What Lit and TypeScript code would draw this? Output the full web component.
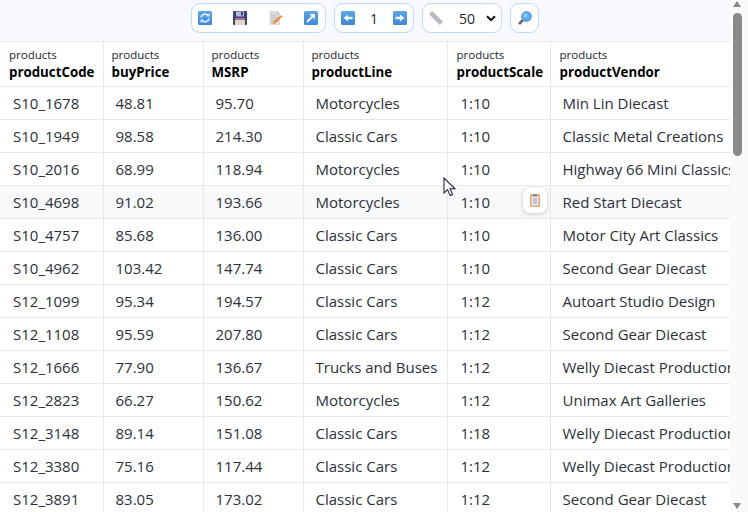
import { LitElement, html, css, svg } from "lit";
import { customElement } from "lit/decorators.js";

const rows: string[][] = [
  ["S10_1678", "48.81", "95.70", "Motorcycles", "1:10", "Min Lin Diecast"],
  ["S10_1949", "98.58", "214.30", "Classic Cars", "1:10", "Classic Metal Creations"],
  ["S10_2016", "68.99", "118.94", "Motorcycles", "1:10", "Highway 66 Mini Classics"],
  ["S10_4698", "91.02", "193.66", "Motorcycles", "1:10", "Red Start Diecast"],
  ["S10_4757", "85.68", "136.00", "Classic Cars", "1:10", "Motor City Art Classics"],
  ["S10_4962", "103.42", "147.74", "Classic Cars", "1:10", "Second Gear Diecast"],
  ["S12_1099", "95.34", "194.57", "Classic Cars", "1:12", "Autoart Studio Design"],
  ["S12_1108", "95.59", "207.80", "Classic Cars", "1:12", "Second Gear Diecast"],
  ["S12_1666", "77.90", "136.67", "Trucks and Buses", "1:12", "Welly Diecast Productions"],
  ["S12_2823", "66.27", "150.62", "Motorcycles", "1:12", "Unimax Art Galleries"],
  ["S12_3148", "89.14", "151.08", "Classic Cars", "1:18", "Welly Diecast Productions"],
  ["S12_3380", "75.16", "117.44", "Classic Cars", "1:12", "Welly Diecast Productions"],
  ["S12_3891", "83.05", "173.02", "Classic Cars", "1:12", "Second Gear Diecast"],
];
const heads = ["productCode", "buyPrice", "MSRP", "productLine", "productScale", "productVendor"];

const blueIcon = (inner: unknown) => html`<svg class="ic" viewBox="0 0 14 14">
  <defs><linearGradient id="bg" x1="0" y1="0" x2="0" y2="1"><stop offset="0" stop-color="#5ba6ea"/><stop offset="1" stop-color="#3f86d8"/></linearGradient></defs>
  <rect x="0" y="0" width="14" height="14" rx="1.5" fill="url(#bg)"/>${inner}</svg>`;

@customElement("app-root")
export class AppRoot extends LitElement {
  static styles = css`
    :host { display: flex; width: 748px; height: 512px; overflow: hidden; position: relative; background: #f8f9fc;
      font-family: "Open Sans", "Noto Sans", sans-serif; color: #212529; }
    .main { width: 730px; flex: none; display: flex; flex-direction: column; overflow: hidden; }
    .toolbar { height: 41px; flex: none; display: flex; justify-content: center; align-items: flex-start; gap: 8px; padding-top: 3px; box-sizing: border-box; }
    .grp { height: 30px; box-sizing: border-box; background: #fff; border: 1px solid #bfdbf7; border-radius: 9px; display: flex; align-items: center; flex: none; }
    .g1 { width: 135px; justify-content: space-between; padding: 0 7px 0 6px; }
    .g2 { width: 80px; justify-content: space-between; padding: 0 6px; font-size: 14px; }
    .g3 { width: 80px; padding: 0 6px; font-size: 14px; }
    .g3 span { margin: 0 11px 0 16px; }
    .g4 { width: 29px; justify-content: center; }
    .ic { width: 14px; height: 14px; display: block; flex: none; }
    .chev { width: 10px; height: 7px; flex: none; }
    table { border-collapse: collapse; table-layout: fixed; width: 730px; background: #fff; }
    th, td { border: 1px solid #e6e8ec; overflow: hidden; white-space: nowrap; box-sizing: border-box; }
    tr > :first-child { border-left: none; }
    tr > :last-child { border-right: none; }
    th { height: 45px; text-align: left; padding: 0 0 0 8px; font-weight: 400; vertical-align: middle; }
    th:first-child { padding-left: 9px; }
    th:nth-child(n + 5) { padding-left: 9px; }
    .t { display: block; font-size: 11.5px; line-height: 15px; color: #212529; }
    .n { display: block; font-size: 13.3px; line-height: 18px; font-weight: 700; color: #000; margin-top: 1px; }
    td { height: 33px; font-size: 15px; padding: 0 0 0 12px; position: relative; color: #2b3038; }
    td:first-child, td:nth-child(5) { padding-left: 13px; }
    tr.hover td { background: #f8f9fb; }
    .copy { position: absolute; right: 3px; top: 2px; width: 24px; height: 25px; background: #fff; border-radius: 7px; box-shadow: 0 1px 4px rgba(0,0,0,.2); display: flex; align-items: center; justify-content: center; }
    .sb { width: 18px; flex: none; box-sizing: border-box; padding-left: 3px; display: flex; flex-direction: column; align-items: flex-start; background: #fafafb; }
    .up { width: 0; height: 0; border-left: 4.5px solid transparent; border-right: 4.5px solid transparent; border-bottom: 6px solid #8a878a; margin-top: 1px; }
    .thumb { width: 9px; height: 143px; background: #8b888b; border-radius: 5px; margin-top: 6px; }
    .down { width: 0; height: 0; border-left: 4.5px solid transparent; border-right: 4.5px solid transparent; border-top: 6px solid #8a878a; margin-top: auto; margin-bottom: 3px; }
    .cursor { position: absolute; left: 443px; top: 177px; width: 14px; height: 20px; pointer-events: none; }
  `;

  render() {
    const w = [103, 100, 100, 144, 103, 180];
    return html`
      <div class="main">
        <div class="toolbar">
          <div class="grp g1">
            ${blueIcon(svg`<path d="M3 6.5A4 4 0 0 1 10 4.5M11 7.5A4 4 0 0 1 4 9.5" fill="none" stroke="#dff0ff" stroke-width="1.7"/><path d="M8 5.5h3.5V2zM6 8.5H2.5V12z" fill="#dff0ff"/>`)}
            <svg class="ic" viewBox="0 0 14 14"><rect width="14" height="14" rx="1" fill="#3a3f80"/><rect x="3" y="0.5" width="8" height="5" fill="#b9bcd6"/><rect x="8" y="1" width="2" height="3.5" fill="#3a3f80"/><rect x="2" y="7.5" width="10" height="6.5" fill="#e4d6d6"/><rect x="2" y="7.5" width="10" height="1.5" fill="#c46a7a"/></svg>
            <svg class="ic" viewBox="0 0 14 14"><path d="M0.5 0H8l3 3v11H0.5z" fill="#dcdada"/><path d="M8 0l3 3H8z" fill="#bdbbbb"/><path d="M2 4h5M2 6.5h7M2 9h4" stroke="#bfbdbd" stroke-width="1"/><path d="M3.5 13l.7-2.2 6-5 1.6 1.6-6 5z" fill="#e8893a"/><path d="M12 4v3M10.5 5.5h3" stroke="#e8862a" stroke-width="1"/></svg>
            ${blueIcon(svg`<path d="M3 11L9.5 4.5" stroke="#eef6ff" stroke-width="2.2"/><path d="M5.5 3H11v5.5z" fill="#eef6ff"/>`)}
          </div>
          <div class="grp g2">
            ${blueIcon(svg`<path d="M2.5 7L7 3.5v2.2h4.5v2.6H7v2.2z" fill="#eef6ff"/>`)}
            <span>1</span>
            ${blueIcon(svg`<path d="M11.5 7L7 3.5v2.2H2.5v2.6H7v2.2z" fill="#eef6ff"/>`)}
          </div>
          <div class="grp g3">
            <svg class="ic" viewBox="0 0 14 14"><path d="M3.2 0L14 10.8 10.8 14 0 3.2z" fill="#bdb8c2"/></svg>
            <span>50</span>
            <svg class="chev" viewBox="0 0 10 7"><path d="M1 1.2L5 5.2l4-4" fill="none" stroke="#111" stroke-width="2"/></svg>
          </div>
          <div class="grp g4">
            <svg class="ic" viewBox="0 0 14 14"><path d="M5 9L1 13" stroke="#6b6570" stroke-width="2.6"/><circle cx="8.5" cy="5.5" r="4.8" fill="#5aaef2" stroke="#4a86c4" stroke-width="1"/><circle cx="7.5" cy="4.5" r="2" fill="#8fcbf8"/></svg>
          </div>
        </div>
        <table>
          <colgroup>${w.map((x) => html`<col style="width:${x}px" />`)}</colgroup>
          <thead><tr>${heads.map((h) => html`<th><span class="t">products</span><span class="n">${h}</span></th>`)}</tr></thead>
          <tbody>
            ${rows.map((r, i) => html`<tr class=${i === 3 ? "hover" : ""}>
              ${r.map((c, j) => html`<td>${c}${i === 3 && j === 4 ? html`<div class="copy">
                <svg style="width:10px;height:13px" viewBox="0 0 10 13"><rect width="10" height="13" rx="1" fill="#e3a77c"/><rect x="1.5" y="2" width="7" height="9.5" fill="#e8e6ea"/><rect x="3" y="0" width="4" height="2.5" fill="#8d8a90"/><path d="M3 5h4M3 7h4M3 9h4" stroke="#a8a5ac" stroke-width="1"/></svg>
              </div>` : ""}</td>`)}
            </tr>`)}
          </tbody>
        </table>
      </div>
      <div class="sb"><div class="up"></div><div class="thumb"></div><div class="down"></div></div>
      <svg class="cursor" viewBox="0 0 14 20"><path d="M1 1v15l3.6-3.4 2.6 6 2.4-1-2.6-5.8H12z" fill="#fff" stroke="#2a2433" stroke-width="1.1"/></svg>
    `;
  }
}
